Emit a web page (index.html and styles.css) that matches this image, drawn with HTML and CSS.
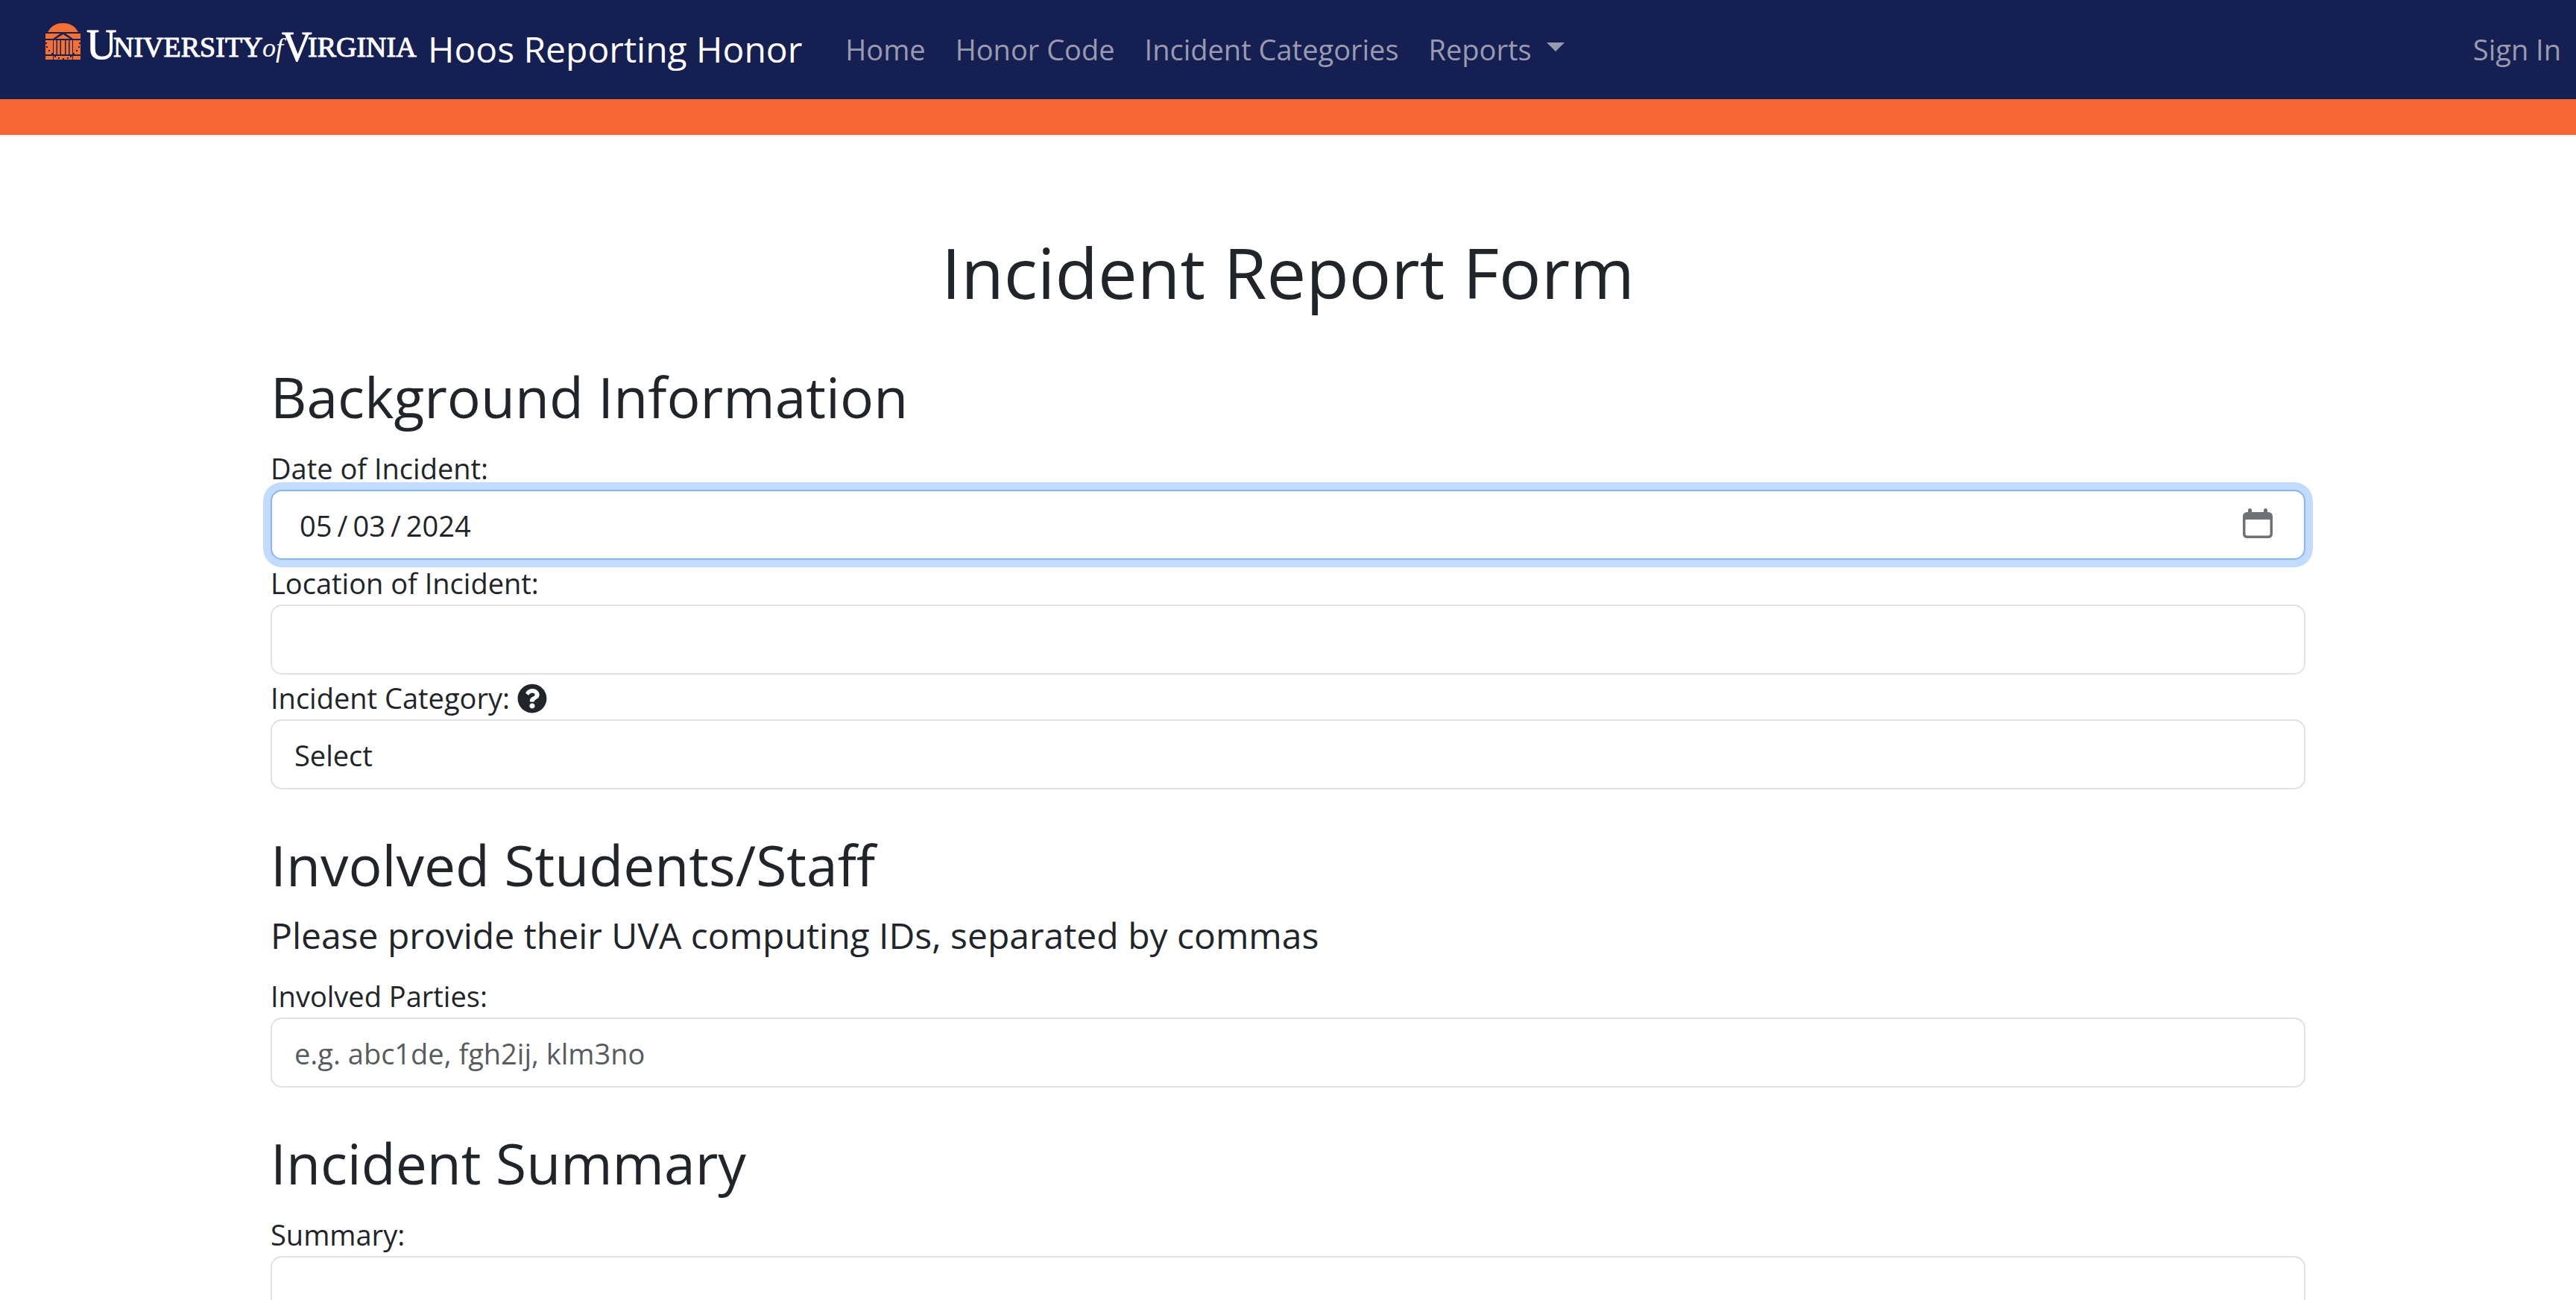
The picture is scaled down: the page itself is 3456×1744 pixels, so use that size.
FILE: index.html
```html
<!DOCTYPE html>
<html lang="en-US">
<head>
<meta charset="utf-8">
<title>Hoos Reporting Honor</title>
<link rel="stylesheet" href="styles.css">
</head>
<body>
<header class="navbar">
  <a class="brand" href="#">
    <svg class="brand-logo" viewBox="0 0 500 72" role="img" aria-label="University of Virginia">
      <g fill="#f37134">
        <path d="M4 14C9 5 16 2 24.500 2S40 5 45 14Z"/>
        <path d="M1 16H21L11 23H1ZM28 16H48V23H38Z"/>
        <path d="M24.500 17L34 23H15Z"/>
        <path fill-rule="evenodd" d="M1 25H11V44H1ZM38 25H48V44H38ZM1 28h2v2h-2zM2 33h2v2h-2zM5 38h2v2h-2zM9 42h2v2h-2zM46 28h2v2h-2zM45 33h2v2h-2zM42 38h2v2h-2zM38 42h2v2h-2z"/>
        <path d="M12 25H15.500V44H12ZM17 25H20.500V44H17ZM22 25H27V44H22ZM28.500 25H32V44H28.500ZM33.500 25H37V44H33.500Z"/>
        <path fill-rule="evenodd" d="M1 46H11V51H1ZM12 46H37V51H12ZM38 46H48V51H38ZM13 46h2v2h-2zM18 48h2v2h-2zM24 49h2v2h-2zM30 48h2v2h-2zM34 46h2v2h-2z"/>
      </g>
      <g class="logo-text">
        <text class="logo-cap" x="56" y="50">U</text>
        <text class="logo-small" x="92" y="47">NIVERSITY</text>
        <text class="logo-of" x="292" y="47">of</text>
        <text class="logo-cap" x="318" y="53">V</text>
        <text class="logo-small" x="353" y="47">IRGINIA</text>
      </g>
    </svg>
    <span>Hoos Reporting Honor</span>
  </a>
  <nav class="nav-links">
    <a href="#">Home</a>
    <a href="#">Honor Code</a>
    <a href="#">Incident Categories</a>
    <a class="dropdown" href="#">Reports</a>
    <a class="sign-in" href="#">Sign In</a>
  </nav>
</header>
<div class="accent-bar"></div>
<main class="container">
  <h1>Incident Report Form</h1>
  <form>
    <section>
      <h2>Background Information</h2>
      <label for="date">Date of Incident:</label>
      <input class="control is-focused" id="date" type="date" value="2024-05-03">
      <label for="location">Location of Incident:</label>
      <input class="control" id="location" type="text">
      <label for="category">Incident Category:
        <svg class="help" viewBox="0 0 512 512"><path fill="currentColor" d="M504 256c0 136.997-111.043 248-248 248S8 392.997 8 256C8 119.083 119.043 8 256 8s248 111.083 248 248zM262.655 90c-54.497 0-89.255 22.957-116.549 63.758-3.536 5.286-2.353 12.415 2.715 16.258l34.699 26.310c5.205 3.947 12.621 3.008 16.665-2.122 17.864-22.658 30.113-35.797 57.303-35.797 20.429 0 45.698 13.148 45.698 32.958 0 14.976-12.363 22.667-32.534 33.976C247.128 238.528 216 254.941 216 296v4c0 6.627 5.373 12 12 12h56c6.627 0 12-5.373 12-12v-1.333c0-28.462 83.186-29.647 83.186-106.667 0-58.002-60.165-102-116.531-102zM256 338c-25.365 0-46 20.635-46 46 0 25.364 20.635 46 46 46s46-20.636 46-46c0-25.365-20.635-46-46-46z"/></svg>
      </label>
      <select class="control" id="category"><option>Select</option></select>
    </section>
    <section>
      <h2>Involved Students/Staff</h2>
      <p class="hint">Please provide their UVA computing IDs, separated by commas</p>
      <label for="parties">Involved Parties:</label>
      <input class="control" id="parties" type="text" placeholder="e.g. abc1de, fgh2ij, klm3no">
    </section>
    <section>
      <h2>Incident Summary</h2>
      <label for="summary">Summary:</label>
      <textarea class="control" id="summary" rows="3"></textarea>
    </section>
  </form>
</main>
</body>
</html>
```
FILE: styles.css
```css
* { box-sizing: border-box; }
html { overflow-x: hidden; scrollbar-width: none; }
body {
  margin: 0;
  background: #fff;
  color: #212529;
  font: 38px/60px "Segoe UI", "Open Sans", sans-serif;
}
.navbar {
  display: flex;
  align-items: center;
  gap: 38px;
  min-height: 133px;
  padding: 0 20px 2px 60px;
  background: #161f51;
}
.brand {
  display: flex;
  align-items: center;
  gap: 14px;
  color: #fff;
  font-size: 48px;
  text-decoration: none;
  white-space: nowrap;
}
.brand-logo { width: 500px; height: 72px; margin-bottom: 2px; }
.logo-text {
  fill: #fff;
  stroke: #fff;
  stroke-width: 1px;
  font-family: "Liberation Serif", serif;
}
.logo-cap { font-size: 56px; }
.logo-small { font-size: 38px; }
.logo-of { font-size: 36px; font-style: italic; stroke-width: 0; }
.nav-links { display: flex; flex: 1; }
.nav-links a {
  padding: 0 20px;
  color: #989bb0;
  text-decoration: none;
  white-space: nowrap;
}
.dropdown { display: flex; align-items: center; gap: 20px; }
.dropdown::after {
  content: "";
  margin-bottom: 6px;
  border: 12px solid transparent;
  border-top-color: currentColor;
  border-bottom: 0;
}
.nav-links .sign-in { margin-left: auto; padding-right: 0; }
.accent-bar { height: 48px; background: #f96635; }
.container { max-width: 2790px; margin: 0 auto; padding: 120px 30px; }
h1, h2 { margin: 0; font-weight: 400; }
h1 { margin-bottom: 52px; font-size: 94px; line-height: 128px; text-align: center; }
h2 { margin-bottom: 14px; font-size: 75px; line-height: 102px; }
section { margin-bottom: 50px; }
.hint { margin: 0 0 20px; font-size: 48px; line-height: 60px; }
label { display: block; padding-top: 2px; line-height: 58px; }
.help { width: 40px; height: 40px; vertical-align: -6px; }
.control {
  display: block;
  width: 100%;
  height: 94px;
  padding: 2px 30px 0;
  border: 2px solid #dee2e6;
  border-radius: 15px;
  outline: 0;
  background: #fff;
  color: inherit;
  font: inherit;
  appearance: none;
}
textarea.control { height: 200px; padding: 15px 30px; resize: none; }
.control::placeholder { color: #595c5f; opacity: 1; }
.control.is-focused {
  padding: 2px 42px 0 36px;
  border-color: #86b7fe;
  box-shadow: 0 0 0 10px #c2dbfe;
}
.control::-webkit-datetime-edit-text { padding: 0 6px; }
.control::-webkit-calendar-picker-indicator {
  width: 40px;
  height: 40px;
  margin: 0 0 6px;
  padding: 0;
  background: url("data:image/svg+xml,%3Csvg xmlns='http://www.w3.org/2000/svg' viewBox='0 0 40 40'%3E%3Cpath fill='%236e7276' fill-rule='evenodd' d='M7 5V2.500a2.500 2.500 0 0 1 5 0V5H28V2.500a2.500 2.500 0 0 1 5 0V5H34.500a5.500 5.500 0 0 1 5.500 5.500V34.500a5.500 5.500 0 0 1-5.500 5.500H5.500A5.500 5.500 0 0 1 0 34.500V10.500A5.500 5.500 0 0 1 5.500 5ZM3.500 15V34a2.500 2.500 0 0 0 2.500 2.500H34a2.500 2.500 0 0 0 2.500-2.500V15Z'/%3E%3C/svg%3E") center / contain no-repeat;
}
```
